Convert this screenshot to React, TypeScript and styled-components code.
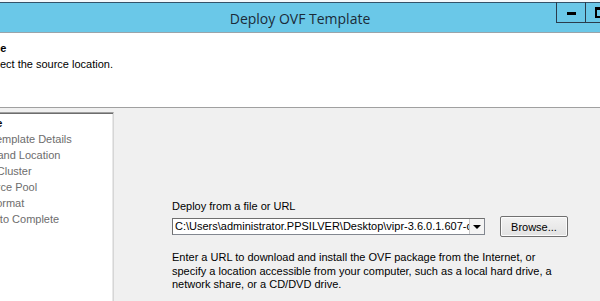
import React from 'react'
import styled, { createGlobalStyle } from 'styled-components'

const GlobalStyle = createGlobalStyle`
  html, body {
    margin: 0;
    padding: 0;
    overflow: hidden;
    background: #ffffff;
  }
  body {
    font-family: "Liberation Sans", Arial, sans-serif;
    font-size: 11px;
    color: #000;
  }
`

const OFFSET = 60

const Window = styled.div`
  width: ${600 + OFFSET * 2}px;
  height: 301px;
  margin-left: -${OFFSET}px;
  display: flex;
  flex-direction: column;
  background: #f0f0f0;
`

const TitleBar = styled.div`
  height: 30px;
  flex: none;
  display: flex;
  align-items: center;
  justify-content: center;
  position: relative;
  background: #6ac8e8;
  border-top: 2px solid #f2f8fb;
  box-shadow: inset 0 1px 0 #33536a;
  border-bottom: 1px solid #9aa4aa;
`

const Title = styled.div`
  font-family: "Open Sans", "Noto Sans", sans-serif;
  font-size: 14px;
  color: #1b2b38;
  margin-top: 2px;
`

const Controls = styled.div`
  position: absolute;
  top: 0;
  right: 0;
  display: flex;
  height: 21px;
`

const CtrlButton = styled.div<{ $w: number }>`
  width: ${p => p.$w}px;
  height: 20px;
  border-left: 1px solid #2a3c4c;
  border-bottom: 1px solid #2a3c4c;
  display: flex;
  align-items: center;
  justify-content: center;
`

const MinGlyph = styled.div`
  width: 9px;
  height: 3px;
  margin-top: 3px;
  background: #000;
`

const MaxGlyph = styled.div`
  width: 7px;
  height: 6px;
  margin-top: 1px;
  border: 2px solid #000;
  border-top-width: 3px;
`

const CloseGlyph = styled.div`
  font-size: 13px;
  font-weight: bold;
`

const Header = styled.div`
  height: 75px;
  flex: none;
  background: #ffffff;
  border-bottom: 1px solid #a0a0a0;
  padding: 8px 0 0 ${OFFSET - 31}px;
  box-sizing: border-box;
`

const HeaderTitle = styled.div`
  font-weight: bold;
  line-height: 15px;
`

const HeaderSub = styled.div`
  padding-left: 15px;
  line-height: 15px;
  margin-top: 1px;
`

const Body = styled.div`
  flex: 1;
  display: flex;
  padding-top: 4px;
`

const StepPanel = styled.div`
  width: ${OFFSET + 114}px;
  flex: none;
  background: #ffffff;
  border-top: 1px solid #a0a0a0;
  border-right: 1px solid #d6d6d6;
  box-shadow: inset 0 1px 0 #6d6d6d, inset -1px 0 0 #e8e8e8;
  box-sizing: border-box;
  padding: 2px 0 0 ${OFFSET - 35}px;
`

const Step = styled.div<{ $current?: boolean }>`
  line-height: 16px;
  white-space: nowrap;
  color: ${p => (p.$current ? '#000' : '#6d6d6d')};
  font-weight: ${p => (p.$current ? 'bold' : 'normal')};
`

const Main = styled.div`
  flex: 1;
  padding: 87px 0 0 58px;
`

const Label = styled.div`
  line-height: 14px;
`

const Row = styled.div`
  display: flex;
  align-items: center;
  margin-top: 3px;
`

const Combo = styled.div`
  width: 313px;
  height: 17px;
  box-sizing: border-box;
  display: flex;
  background: #fff;
  border: 1px solid #828790;
  border-top-color: #6f6f6f;
  border-left-color: #6f6f6f;
`

const ComboText = styled.div`
  flex: 1;
  overflow: hidden;
  white-space: nowrap;
  padding-left: 2px;
  line-height: 15px;
`

const ComboArrow = styled.div`
  width: 14px;
  flex: none;
  display: flex;
  align-items: center;
  justify-content: center;
  background: #f4f4f4;
  border-left: 1px solid #c8c8c8;
`

const Arrow = styled.div`
  width: 0;
  height: 0;
  border-left: 4px solid transparent;
  border-right: 4px solid transparent;
  border-top: 4px solid #000;
`

const Button = styled.div`
  margin-left: 15px;
  width: 68px;
  height: 21px;
  box-sizing: border-box;
  border: 1px solid #707070;
  border-radius: 2px;
  background: linear-gradient(#f2f2f2, #e2e2e2);
  box-shadow: inset 0 0 0 1px #fcfcfc;
  display: flex;
  align-items: center;
  justify-content: center;
`

const Description = styled.div`
  margin-top: 14px;
  line-height: 13.5px;
  white-space: nowrap;
`

const steps = [
  'OVF Template Details',
  'Name and Location',
  'Host / Cluster',
  'Resource Pool',
  'Disk Format',
  'Ready to Complete',
]

export default function App() {
  return (
    <>
      <GlobalStyle />
      <Window>
        <TitleBar>
          <Title>Deploy OVF Template</Title>
          <Controls>
            <CtrlButton $w={28}><MinGlyph /></CtrlButton>
            <CtrlButton $w={28}><MaxGlyph /></CtrlButton>
            <CtrlButton $w={45}><CloseGlyph>✕</CloseGlyph></CtrlButton>
          </Controls>
        </TitleBar>
        <Header>
          <HeaderTitle>Source</HeaderTitle>
          <HeaderSub>Select the source location.</HeaderSub>
        </Header>
        <Body>
          <StepPanel>
            <Step $current>Source</Step>
            {steps.map(s => (
              <Step key={s}>{s}</Step>
            ))}
          </StepPanel>
          <Main>
            <Label>Deploy from a file or URL</Label>
            <Row>
              <Combo>
                <ComboText>C:\Users\administrator.PPSILVER\Desktop\vipr-3.6.0.1.607-data.ovf</ComboText>
                <ComboArrow><Arrow /></ComboArrow>
              </Combo>
              <Button>Browse...</Button>
            </Row>
            <Description>
              Enter a URL to download and install the OVF package from the Internet, or<br />
              specify a location accessible from your computer, such as a local hard drive, a<br />
              network share, or a CD/DVD drive.
            </Description>
          </Main>
        </Body>
      </Window>
    </>
  )
}
